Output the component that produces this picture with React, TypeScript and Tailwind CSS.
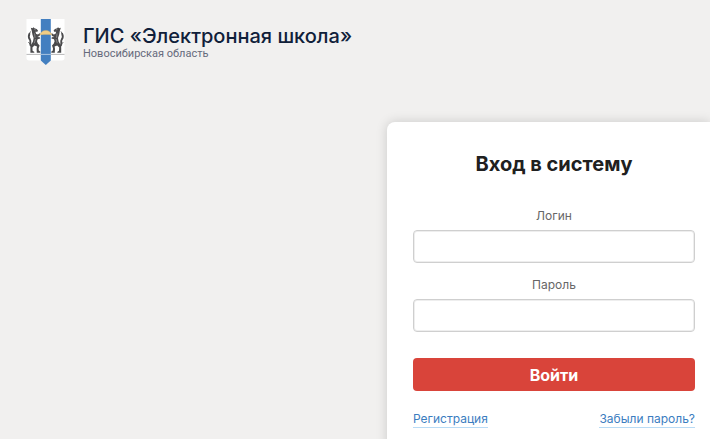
import type { InputHTMLAttributes } from "react"

// Left beast of the coat of arms, mirrored for the right one
function Sable() {
  return (
    <g fill="#4a4a4c" stroke="#4a4a4c" strokeLinecap="round" strokeLinejoin="round">
      <path
        stroke="none"
        d="M4.8 8.8 L6.4 9.2 L7.6 8.2 L8.4 9.2 L10.6 10 L12 11.6 L11.4 12.8 L9.4 12.8 L10.2 15 L12 15.6 L13.6 14.2 L14.6 15 L13.4 17 L11.4 18 L13.8 18.2 L14.2 19.6 L11.6 20.2 L11 22.2 L11.8 24.6 L13.6 26.4 L12.6 29.4 L12.8 31.6 L14.4 32.8 L14.2 33.8 L10.8 33.8 L10.6 29.8 L11 27.6 L8.4 26.6 L6.4 28.6 L6.6 31.8 L8.4 33 L8.2 33.8 L4.4 33.8 L4.4 28.6 L5 26 L7 22.6 L7.6 19 L6.4 15.4 L5.8 12 Z"
      />
      <path fill="none" strokeWidth="1.9" d="M5.6 27 C2.8 26.2 5.4 22.8 4 20.8 C2.8 19 2.2 17.2 3.4 14.8" />
      <path fill="none" strokeWidth="0.8" d="M3.4 14.8 L4.4 12.8 M2.6 23.4 L3.6 24.6" />
      <path fill="none" stroke="#bdbdbf" strokeWidth="0.5" d="M8.6 14.8 L9 18.4 M9.4 20.4 L8.4 23.8 M8.6 10.6 L9.4 10.8" />
    </g>
  )
}

function Emblem() {
  return (
    <svg width="39" height="47" viewBox="0 0 39 47" role="img" aria-label="Герб Новосибирской области">
      <path fill="#fff" d="M0.5 0 H38.5 V39.5 Q38.5 41.5 36 41.5 H23.5 L19.6 45 L15.7 41.5 H3 Q0.5 41.5 0.5 39.5 Z" />
      <path fill="#437fc0" d="M14.8 0 H24.8 V41.6 L19.8 46 L14.8 41.6 Z" />
      <Sable />
      <g transform="translate(39.6 0) scale(-1 1)">
        <Sable />
      </g>
      <path fill="#f0cd85" stroke="#dbb76d" strokeWidth="0.4" d="M13.8 16 C14.6 13.4 16.8 11.4 19.8 11.4 S25 13.4 25.8 16 C23.6 15.2 16 15.2 13.8 16 Z" />
      <path stroke="#a5a5a7" strokeWidth="0.8" d="M0.5 35.4 H14.8 M24.8 35.4 H38.5" />
      <path stroke="#c4d6ea" strokeWidth="0.8" d="M14.8 35.4 H24.8" />
    </svg>
  )
}

interface FieldProps extends InputHTMLAttributes<HTMLInputElement> {
  id: string
  label: string
}

function Field({ id, label, ...props }: FieldProps) {
  return (
    <div className="flex flex-col">
      <label htmlFor={id} className="mb-1 text-center text-xs leading-5 text-[#666]">
        {label}
      </label>
      <input
        id={id}
        name={id}
        className="h-[33px] w-full rounded border border-[#cfcfcf] bg-white px-3 text-sm text-[#222] shadow-[inset_0_0_0_1px_#eeeeee] outline-none focus:border-[#3b7dbf]"
        {...props}
      />
    </div>
  )
}

export default function App() {
  return (
    <div className="flex min-h-screen flex-col overflow-hidden bg-[#f1f0ef] font-['Inter','Liberation_Sans',sans-serif]">
      <header className="flex items-start gap-[18px] px-[26px] pt-[19px]">
        <Emblem />
        <div className="pt-[5px]">
          <h1 className="text-xl leading-6 font-medium text-[#10203a]">ГИС «Электронная школа»</h1>
          <p className="font-['Roboto','Liberation_Sans',sans-serif] text-[11px] leading-3 text-[#666a7c]">
            Новосибирская область
          </p>
        </div>
      </header>

      <main className="mt-14 flex grow justify-end">
        <form
          className="w-[323px] rounded-tl-lg bg-white pt-7 pr-[15px] pb-8 pl-[26px] shadow-[0_0_12px_rgba(0,0,0,0.16)]"
          onSubmit={(e) => e.preventDefault()}
        >
          <h2 className="text-center text-xl leading-7 font-bold text-[#202020]">Вход в систему</h2>

          <div className="mt-7 flex flex-col gap-3">
            <Field id="login" label="Логин" type="text" autoComplete="username" />
            <Field id="password" label="Пароль" type="password" autoComplete="current-password" />
          </div>

          <button
            type="submit"
            className="mt-[26px] h-[33px] w-full rounded bg-[#d9443a] text-base font-bold text-white hover:bg-[#c73a31]"
          >
            Войти
          </button>

          <div className="mt-5 flex items-start justify-between text-xs leading-4 text-[#3b7dbf]">
            <a href="#register" className="border-b border-[#b9dbf5]">Регистрация</a>
            <a href="#restore" className="border-b border-[#b9dbf5]">Забыли пароль?</a>
          </div>
        </form>
      </main>
    </div>
  )
}
